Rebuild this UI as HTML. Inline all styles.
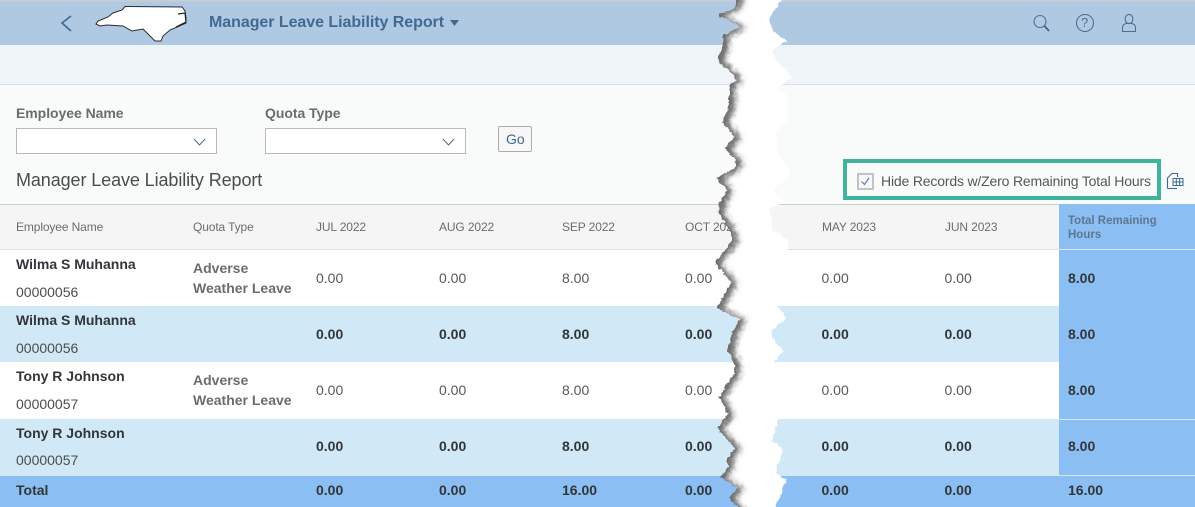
<!DOCTYPE html>
<html><head><meta charset="utf-8">
<style>
html,body{margin:0;padding:0;background:#fff}
#p{position:relative;width:1195px;height:507px;overflow:hidden;font-family:"Liberation Sans",sans-serif;color:#32363a;background:#fff;filter:blur(.3px)}
.b{position:absolute}
.t{position:absolute;white-space:nowrap;line-height:16px}
.h{font-size:12px;color:#6a6d70;letter-spacing:-.12px}
.n{font-size:14px;color:#32363a;font-weight:bold;letter-spacing:0}
.i{font-size:14px;color:#4a4d50}
.q{font-size:14px;color:#6a6d70;font-weight:bold;letter-spacing:0}
.v{font-size:14px;color:#55585b}
.s{font-size:14px;color:#32363a;font-weight:bold}
.lab{font-size:14px;color:#6a6d70;font-weight:bold;letter-spacing:0}
.sel{position:absolute;top:128px;width:199px;height:24px;background:#fff;border:1px solid #b8b8b8}
</style></head><body><div id="p">
<div class="b" style="left:0;top:0;width:1195px;height:45px;background:#b0c9e3"></div>
<div class="b" style="left:0;top:0;width:1195px;height:2px;background:#c3cdd8"></div>
<div class="b" style="left:0;top:45px;width:1195px;height:39px;background:#eff4f9"></div>
<div class="b" style="left:0;top:84px;width:1195px;height:1px;background:#d8e0e8"></div>
<div class="b" style="left:0;top:85px;width:1195px;height:119px;background:#f9fafa"></div>
<div class="b" style="left:0;top:204px;width:1195px;height:1px;background:#cfcfcf"></div>
<div class="b" style="left:0;top:205px;width:1195px;height:44px;background:#f5f5f5"></div>
<div class="b" style="left:0;top:249px;width:1195px;height:1px;background:#e2e2e2"></div>
<div class="b" style="left:0;top:250px;width:1195px;height:56px;background:#fff"></div>
<div class="b" style="left:0;top:306px;width:1195px;height:56px;background:#d1e8f6"></div>
<div class="b" style="left:0;top:362px;width:1195px;height:57px;background:#fff"></div>
<div class="b" style="left:0;top:419px;width:1195px;height:57px;background:#d1e8f6"></div>
<div class="b" style="left:0;top:476px;width:1195px;height:31px;background:#8bbff3"></div>
<div class="b" style="left:1059px;top:204px;width:136px;height:45px;background:#8bbff3"></div>
<div class="b" style="left:1059px;top:250px;width:136px;height:226px;background:#8bbff3"></div>
<div class="b" style="left:1059px;top:249px;width:136px;height:1px;background:#dbe9f8"></div>
<div class="b" style="left:1059px;top:419px;width:136px;height:1px;background:#d5e6f9"></div>
<div class="b" style="left:1059px;top:475px;width:136px;height:1px;background:#d5e6f9"></div>

<svg class="b" style="left:0;top:0" width="1195" height="50" viewBox="0 0 1195 50">
<path d="M71 16L62 23L71 31" fill="none" stroke="#3f6a92" stroke-width="1.7"/>
<path d="M96 24L98 21L108 17L113 13L122 10L125 6.500L182 7L185 11L186 18L186 23L177 27L170 30L163 36L161 41L155 41L143 29L132 31L123 26L107 25L100 26Z" fill="#fff" stroke="#2b2b2b" stroke-width="1"/>
<path d="M178 14L185 13L186 22L176 27" fill="none" stroke="#222" stroke-width="1.200"/>
<path d="M450 20L459 20L454.500 26Z" fill="#3f6a92"/>
<circle cx="1040" cy="21.500" r="6" fill="none" stroke="#4f6f8f" stroke-width="1.100"/>
<path d="M1044.500 26L1049 31" stroke="#40607f" stroke-width="1.700"/>
<circle cx="1085" cy="23" r="8.500" fill="none" stroke="#4f6f8f" stroke-width="1.100"/>
<ellipse cx="1129" cy="19" rx="3.900" ry="4.600" fill="none" stroke="#4f6f8f" stroke-width="1.100"/>
<path d="M1122.500 31.500v-3.500q0-4 4-4.500h5q4 .5 4 4.500v3.500z" fill="none" stroke="#4f6f8f" stroke-width="1.100"/>
</svg>
<div class="t" style="left:209px;top:15px;font-size:16px;font-weight:bold;color:#3f6a92;letter-spacing:-.05px">Manager Leave Liability Report</div>
<div class="t" style="left:1081px;top:15px;font-size:13px;color:#4f6f8f">?</div>

<div class="t lab" style="left:16px;top:105px;letter-spacing:-.05px">Employee Name</div>
<div class="t lab" style="left:265px;top:105px;letter-spacing:-.05px">Quota Type</div>
<div class="sel" style="left:16px"></div>
<div class="sel" style="left:265px"></div>
<svg class="b" style="left:0;top:125px" width="480" height="30">
<path d="M194 14L199.500 20L205 14" fill="none" stroke="#4f6f8f" stroke-width="1"/>
<path d="M443 14L448.500 20L454 14" fill="none" stroke="#4f6f8f" stroke-width="1"/>
</svg>
<div class="b" style="left:498px;top:126px;width:32px;height:24px;border:1px solid #ababab;border-radius:2px;background:#f7f7f7"></div>
<div class="t" style="left:506px;top:131px;font-size:14px;color:#3f6a92">Go</div>
<div class="t" style="left:16px;top:172px;font-size:18px;color:#4a4d50;letter-spacing:-.1px">Manager Leave Liability Report</div>

<div class="b" style="left:843px;top:159px;width:310px;height:33px;border:4px solid #3fb39c"></div>
<div class="b" style="left:857px;top:173px;width:13px;height:13px;border:2px solid #c3c3c3;background:#f7f7f7"></div>
<svg class="b" style="left:857px;top:173px" width="17" height="17"><path d="M4.500 8.500L7.500 11.500L12 5" fill="none" stroke="#3f7fc0" stroke-width="1.100"/></svg>
<div class="t" style="left:881px;top:173px;font-size:14px;color:#55585b;letter-spacing:-.17px">Hide Records w/Zero Remaining Total Hours</div>
<svg class="b" style="left:1165px;top:172px" width="20" height="18" viewBox="0 0 20 18">
<path d="M2.500 16.500V6L7 1.500H12.500V5" fill="none" stroke="#3f6a92" stroke-width="1.100"/>
<path d="M2.500 16.500H12" fill="none" stroke="#3f6a92" stroke-width="1.100"/>
<rect x="8" y="6.500" width="10" height="7" fill="#f9fafa" stroke="#3f6a92" stroke-width="1"/>
<path d="M8 10H18M11.300 6.500V13.500M14.600 6.500V13.500" stroke="#3f6a92" stroke-width="1"/>
</svg>

<div class="t h" style="left:16px;top:219px">Employee Name</div>
<div class="t h" style="left:193px;top:219px">Quota Type</div>
<div class="t h" style="left:316px;top:219px">JUL 2022</div>
<div class="t h" style="left:439px;top:219px">AUG 2022</div>
<div class="t h" style="left:562px;top:219px">SEP 2022</div>
<div class="t h" style="left:685px;top:219px">OCT 2022</div>
<div class="t h" style="left:822px;top:219px">MAY 2023</div>
<div class="t h" style="left:945px;top:219px">JUN 2023</div>
<div class="t" style="left:1068px;top:214px;font-size:11.500px;font-weight:bold;color:#5f7590;line-height:14px">Total Remaining<br>Hours</div>

<div class="t n" style="left:16px;top:256px">Wilma S Muhanna</div>
<div class="t i" style="left:16px;top:284px">00000056</div>
<div class="t q" style="left:193px;top:260px">Adverse</div>
<div class="t q" style="left:193px;top:280px">Weather Leave</div>
<div class="t n" style="left:16px;top:312px">Wilma S Muhanna</div>
<div class="t i" style="left:16px;top:340px">00000056</div>
<div class="t n" style="left:16px;top:368px">Tony R Johnson</div>
<div class="t i" style="left:16px;top:396px">00000057</div>
<div class="t q" style="left:193px;top:372px">Adverse</div>
<div class="t q" style="left:193px;top:392px">Weather Leave</div>
<div class="t n" style="left:16px;top:425px">Tony R Johnson</div>
<div class="t i" style="left:16px;top:452px">00000057</div>
<div class="t n" style="left:16px;top:482px">Total</div>

<div class="t v" style="left:316px;top:270px">0.00</div><div class="t v" style="left:439px;top:270px">0.00</div><div class="t v" style="left:562px;top:270px">8.00</div><div class="t v" style="left:685px;top:270px">0.00</div><div class="t v" style="left:821.500px;top:270px">0.00</div><div class="t v" style="left:944.500px;top:270px">0.00</div><div class="t s" style="left:1068px;top:270px">8.00</div>
<div class="t s" style="left:316px;top:326px">0.00</div><div class="t s" style="left:439px;top:326px">0.00</div><div class="t s" style="left:562px;top:326px">8.00</div><div class="t s" style="left:685px;top:326px">0.00</div><div class="t s" style="left:821.500px;top:326px">0.00</div><div class="t s" style="left:944.500px;top:326px">0.00</div><div class="t s" style="left:1068px;top:326px">8.00</div>
<div class="t v" style="left:316px;top:382px">0.00</div><div class="t v" style="left:439px;top:382px">0.00</div><div class="t v" style="left:562px;top:382px">8.00</div><div class="t v" style="left:685px;top:382px">0.00</div><div class="t v" style="left:821.500px;top:382px">0.00</div><div class="t v" style="left:944.500px;top:382px">0.00</div><div class="t s" style="left:1068px;top:382px">8.00</div>
<div class="t s" style="left:316px;top:438px">0.00</div><div class="t s" style="left:439px;top:438px">0.00</div><div class="t s" style="left:562px;top:438px">8.00</div><div class="t s" style="left:685px;top:438px">0.00</div><div class="t s" style="left:821.500px;top:438px">0.00</div><div class="t s" style="left:944.500px;top:438px">0.00</div><div class="t s" style="left:1068px;top:438px">8.00</div>
<div class="t s" style="left:316px;top:482px">0.00</div><div class="t s" style="left:439px;top:482px">0.00</div><div class="t s" style="left:562px;top:482px">16.00</div><div class="t s" style="left:685px;top:482px">0.00</div><div class="t s" style="left:821.500px;top:482px">0.00</div><div class="t s" style="left:944.500px;top:482px">0.00</div><div class="t s" style="left:1068px;top:482px">16.00</div>

<svg class="b" style="left:0;top:0" width="1195" height="507" viewBox="0 0 1195 507">
<defs>
<clipPath id="c"><path d="M739 -10L735 8L717 15L728 20L740 27L723 35L723 45L718 60L730 72L737 80L729 85L729 107L722 122L735 137L725 148L736 160L735 168L717 178L727 190L720 202L718 213L727 225L733 240L718 258L715 265L723 272L731 282L725 293L717 308L740 319L732 333L728 350L734 363L734 373L719 397L728 415L717 428L735 448L727 458L728 467L720 477L738 488L729 497L743 517L770 517L783 490L786 480L775 473L783 450L772 440L778 420L775 362L783 350L772 338L772 330L786 318L778 307L788 250L788 240L772 230L770 208L785 202L773 190L792 173L780 157L775 133L788 120L788 97L777 88L792 77L775 58L772 50L787 41L772 30L770 17L787 -10Z"/></clipPath>
<filter id="f" x="-20%" y="-5%" width="140%" height="110%"><feGaussianBlur stdDeviation="3"/></filter>
<filter id="r" filterUnits="userSpaceOnUse" x="680" y="-10" width="140" height="530"><feTurbulence type="fractalNoise" baseFrequency=".22" numOctaves="3" seed="4" result="n"/><feDisplacementMap in="SourceGraphic" in2="n" scale="5" xChannelSelector="R" yChannelSelector="G"/></filter>
</defs>
<g filter="url(#r)">
<path d="M739 -10L735 8L717 15L728 20L740 27L723 35L723 45L718 60L730 72L737 80L729 85L729 107L722 122L735 137L725 148L736 160L735 168L717 178L727 190L720 202L718 213L727 225L733 240L718 258L715 265L723 272L731 282L725 293L717 308L740 319L732 333L728 350L734 363L734 373L719 397L728 415L717 428L735 448L727 458L728 467L720 477L738 488L729 497L743 517L770 517L783 490L786 480L775 473L783 450L772 440L778 420L775 362L783 350L772 338L772 330L786 318L778 307L788 250L788 240L772 230L770 208L785 202L773 190L792 173L780 157L775 133L788 120L788 97L777 88L792 77L775 58L772 50L787 41L772 30L770 17L787 -10Z" fill="#fff"/>
<g clip-path="url(#c)">
<path transform="translate(6 1)" filter="url(#f)" fill="#6a6a6a" d="M690 -20L739 -10L735 8L717 15L728 20L740 27L723 35L723 45L718 60L730 72L737 80L729 85L729 107L722 122L735 137L725 148L736 160L735 168L717 178L727 190L720 202L718 213L727 225L733 240L718 258L715 265L723 272L731 282L725 293L717 308L740 319L732 333L728 350L734 363L734 373L719 397L728 415L717 428L735 448L727 458L728 467L720 477L738 488L729 497L743 517L690 530Z"/>
</g>
</g>
</svg>
</div></body></html>
